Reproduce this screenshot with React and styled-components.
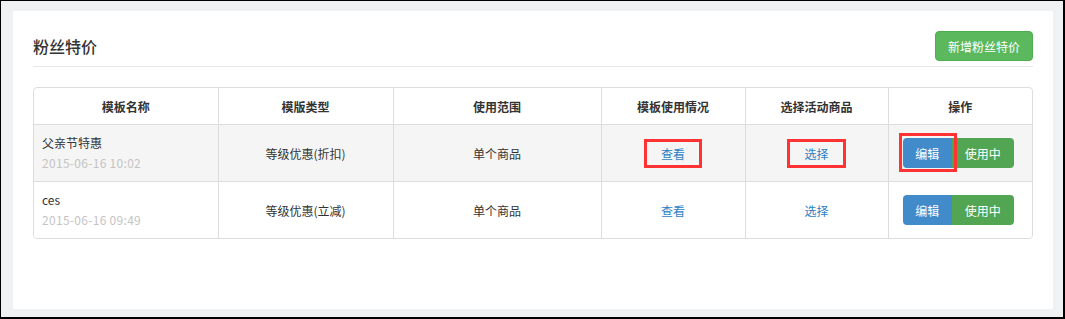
import React from 'react'
import styled, { createGlobalStyle } from 'styled-components'

const GlobalStyle = createGlobalStyle`
    html, body {
        margin: 0;
        padding: 0;
    }
    body {
        background: #f0f1f3;
        font-family: "Noto Sans CJK SC", "Noto Sans", sans-serif;
        color: #333;
        font-size: 12px;
    }
`

const Frame = styled.div`
    box-sizing: border-box;
    width: 1065px;
    height: 319px;
    border: 1px solid #000;
    border-right-width: 2px;
    border-bottom-width: 2px;
    padding: 10px 10px 0 12px;
`

const Panel = styled.div`
    box-sizing: border-box;
    background: #fff;
    height: 298px;
    width: 1040px;
    padding: 20px;
`

const Header = styled.div`
    display: flex;
    align-items: center;
    justify-content: space-between;
    padding-bottom: 5px;
    border-bottom: 1px solid #e8e8e8;
`

const Title = styled.h2`
    margin: 0;
    font-size: 16px;
    font-weight: 500;
    color: #333;
`

const AddButton = styled.button`
    height: 30px;
    width: 98px;
    padding: 0;
    border: 1px solid #4cae4c;
    border-radius: 4px;
    background: #5cb85c;
    color: #fff;
    font-family: inherit;
    font-size: 12px;
`

const TableBox = styled.div`
    margin-top: 20px;
    border: 1px solid #ddd;
    border-radius: 4px;
    overflow: hidden;
`

const Table = styled.table`
    width: 100%;
    border-collapse: collapse;
    table-layout: fixed;
`

const Th = styled.th`
    height: 36px;
    padding: 0;
    font-size: 12px;
    font-weight: bold;
    color: #333;
    text-align: center;
    border-left: 1px solid #ddd;
    &:first-child { border-left: none; }
`

const Tr = styled.tr`
    background: ${p => (p.$striped ? '#f5f5f5' : '#fff')};
    border-top: 1px solid #ddd;
`

const Td = styled.td`
    height: 56px;
    padding: 0 ${p => p.$padRight || 0}px 0 0;
    text-align: ${p => p.$align || 'center'};
    vertical-align: middle;
    border-left: 1px solid #ddd;
    &:first-child { border-left: none; }
`

const NameCell = styled.div`
    padding-left: 8px;
    line-height: 20px;
`

const Name = styled.div`
    color: #333;
`

const DateText = styled.div`
    color: #c4c4c4;
    letter-spacing: 0.3px;
`

const Link = styled.a`
    display: inline-block;
    color: #2b7fc4;
    text-decoration: none;
    line-height: 17px;
    padding: 3px 14px;
    border: 3px solid ${p => (p.$marked ? '#f33' : 'transparent')};
`

const Group = styled.div`
    display: inline-flex;
`

const GroupButton = styled.button`
    position: relative;
    height: 30px;
    padding: 0;
    border: none;
    font-family: inherit;
    font-size: 12px;
    color: #fff;
    width: ${p => p.$w}px;
    background: ${p => p.$bg};
    &:first-child { border-radius: 4px 0 0 4px; }
    &:last-child { border-radius: 0 4px 4px 0; }
    ${p => p.$marked && `
        z-index: 1;
        &::after {
            content: "";
            position: absolute;
            top: -5px;
            left: -4px;
            right: -5px;
            bottom: -4px;
            border: 3px solid #f33;
        }
    `}
`

const rows = [
    { name: '父亲节特惠', date: '2015-06-16 10:02', type: '等级优惠(折扣)', marked: true },
    { name: 'ces', date: '2015-06-16 09:49', type: '等级优惠(立减)', marked: false },
]

const cols = [
    { title: '模板名称', w: 184 },
    { title: '模版类型', w: 175 },
    { title: '使用范围', w: 208 },
    { title: '模板使用情况', w: 144 },
    { title: '选择活动商品', w: 143 },
    { title: '操作', w: 144 },
]

const App = () => (
    <>
        <GlobalStyle />
        <Frame>
            <Panel>
                <Header>
                    <Title>粉丝特价</Title>
                    <AddButton>新增粉丝特价</AddButton>
                </Header>
                <TableBox>
                    <Table>
                        <colgroup>
                            {cols.map(c => <col key={c.title} width={c.w} />)}
                        </colgroup>
                        <thead>
                            <tr>
                                {cols.map(c => <Th key={c.title}>{c.title}</Th>)}
                            </tr>
                        </thead>
                        <tbody>
                            {rows.map((r, i) => (
                                <Tr key={r.name} $striped={i % 2 === 0}>
                                    <Td $align="left">
                                        <NameCell>
                                            <Name>{r.name}</Name>
                                            <DateText>{r.date}</DateText>
                                        </NameCell>
                                    </Td>
                                    <Td>{r.type}</Td>
                                    <Td>单个商品</Td>
                                    <Td><Link href="#" $marked={r.marked}>查看</Link></Td>
                                    <Td><Link href="#" $marked={r.marked}>选择</Link></Td>
                                    <Td $padRight={4}>
                                        <Group>
                                            <GroupButton $w={49} $bg="#428bca" $marked={r.marked}>编辑</GroupButton>
                                            <GroupButton $w={62} $bg="#52a552">使用中</GroupButton>
                                        </Group>
                                    </Td>
                                </Tr>
                            ))}
                        </tbody>
                    </Table>
                </TableBox>
            </Panel>
        </Frame>
    </>
)

export default App
